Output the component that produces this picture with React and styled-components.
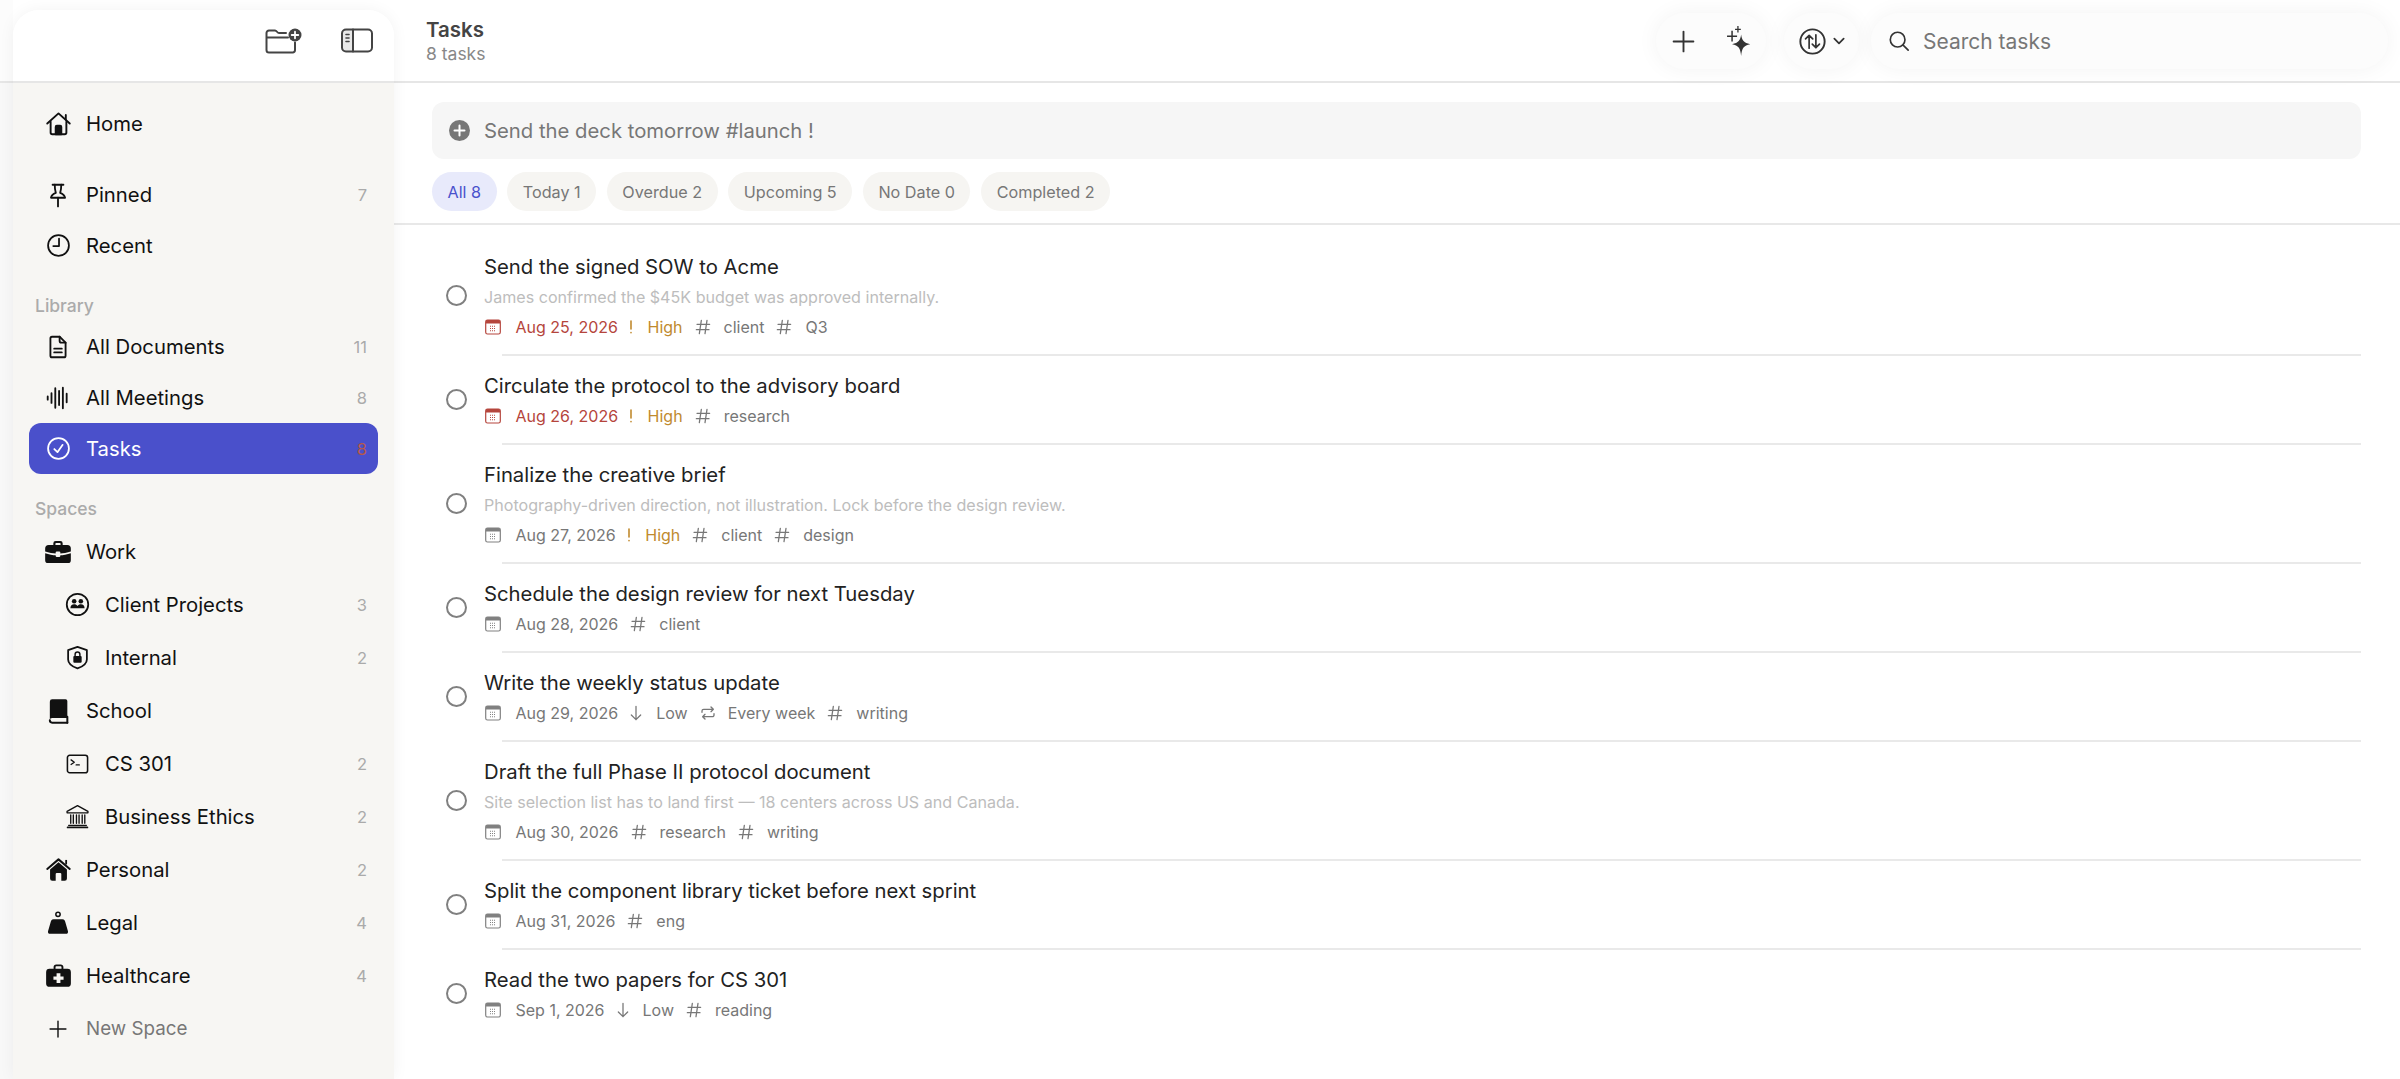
import React from "react";
import styled, { createGlobalStyle } from "styled-components";

const Global = createGlobalStyle`
  html, body { margin: 0; padding: 0; background: #fff; }
  body { font-family: Inter, "Liberation Sans", sans-serif; -webkit-font-smoothing: antialiased; }
  * { box-sizing: border-box; }
`;

/* ---------- layout ---------- */
const Shell = styled.div`
  display: flex;
  width: 2400px;
  height: 1079px;
  overflow: hidden;
  background: #fff;
`;
const Gutter = styled.div`
  width: 13px;
  flex: none;
  display: flex;
  flex-direction: column;
`;
const GutterTop = styled.div`
  height: 83px;
  flex: none;
  background: #fcfcfc;
  border-bottom: 2px solid #e6e6e6;
`;
const GutterBottom = styled.div`
  flex: 1;
  background: #f8f8f8;
`;
const Sidebar = styled.aside`
  width: 381px;
  flex: none;
  margin-top: 10px;
  display: flex;
  flex-direction: column;
  border-radius: 26px 26px 0 0;
  overflow: hidden;
  box-shadow: 0 0 16px rgba(0, 0, 0, 0.05);
  position: relative;
  z-index: 1;
`;
const SidebarTop = styled.div`
  height: 73px;
  flex: none;
  background: #fff;
  border-bottom: 2px solid #e6e6e6;
  display: flex;
  align-items: center;
  justify-content: flex-end;
  gap: 38px;
  padding: 0 21px 10px 0;
  color: #444;
`;
const SidebarBody = styled.nav`
  flex: 1;
  background: #f7f6f3;
  padding: 15px 16px 0;
`;
const Row = styled.div`
  display: flex;
  align-items: center;
  height: ${(p) => (p.$tall ? 53 : 51)}px;
  padding-left: ${(p) => (p.$nested ? 34 : 15)}px;
  padding-right: 11px;
  margin-bottom: ${(p) => p.$after || 0}px;
  border-radius: 12px;
  background: ${(p) => (p.$active ? "#4a50cb" : "transparent")};
  color: ${(p) => (p.$active ? "#fff" : p.$muted ? "#777" : "#111")};
  font-size: ${(p) => (p.$muted ? 18.8 : 20.3)}px;
`;
const RowIcon = styled.span`
  width: 28px;
  height: 28px;
  flex: none;
  margin-right: 14px;
  display: flex;
  align-items: center;
  justify-content: center;
  color: ${(p) => (p.$active ? "#fff" : "#111")};
`;
const RowLabel = styled.span`
  flex: 1;
`;
const Count = styled.span`
  font-size: 16.5px;
  color: ${(p) => (p.$alert ? "#b5584a" : "#aaa")};
`;
const GroupLabel = styled.div`
  height: ${(p) => p.$h || 50}px;
  padding: 22px 0 0 6px;
  font-size: 17.5px;
  line-height: 25px;
  font-weight: 500;
  color: #ababab;
`;

/* ---------- main ---------- */
const Main = styled.main`
  flex: 1;
  min-width: 0;
  display: flex;
  flex-direction: column;
`;
const Header = styled.header`
  height: 83px;
  flex: none;
  border-bottom: 2px solid #e6e6e6;
  display: flex;
  align-items: center;
  padding: 1px 12px 0 32px;
  background: #fff;
`;
const TitleBlock = styled.div`
  flex: 1;
  display: flex;
  flex-direction: column;
`;
const PageTitle = styled.div`
  font-size: 20.5px;
  line-height: 26px;
  font-weight: 600;
  color: #444;
`;
const PageSub = styled.div`
  font-size: 17.5px;
  line-height: 22px;
  color: #888;
`;
const Pill = styled.div`
  height: 56px;
  width: ${(p) => p.$w}px;
  flex: ${(p) => (p.$w ? "none" : 1)};
  margin-left: ${(p) => p.$ml || 0}px;
  display: flex;
  align-items: center;
  padding-left: ${(p) => p.$pl || 0}px;
  gap: ${(p) => p.$gap || 0}px;
  border-radius: 28px;
  background: #fcfcfc;
  box-shadow: 0 0 22px rgba(0, 0, 0, 0.05);
  color: #333;
`;
const Search = styled(Pill)`
  width: 517px;
  flex: none;
`;
const SearchText = styled.span`
  font-size: 21px;
  color: #777;
`;
const Body = styled.div`
  flex: 1;
  min-height: 0;
`;
const QuickAdd = styled.div`
  height: 57px;
  margin: 19px 39px 0 38px;
  padding-left: 17px;
  display: flex;
  align-items: center;
  gap: 14px;
  background: #f6f6f6;
  border-radius: 12px;
  font-size: 20.3px;
  color: #777;
`;
const Chips = styled.div`
  display: flex;
  gap: 10.7px;
  height: 66px;
  padding: 13px 0 0 38px;
  border-bottom: 2px solid #e8e8e8;
`;
const Chip = styled.div`
  height: 39px;
  padding: 0 15.5px;
  display: flex;
  align-items: center;
  border-radius: 20px;
  font-size: 16.2px;
  background: ${(p) => (p.$active ? "#e8eafb" : "#f6f5f2")};
  color: ${(p) => (p.$active ? "#4a52cc" : "#777")};
`;
const List = styled.div`
  padding-top: 11px;
`;
const Task = styled.div`
  display: flex;
  align-items: center;
  padding-left: 52px;
`;
const Circle = styled.div`
  width: 21px;
  height: 21px;
  flex: none;
  margin-right: 17px;
  border-radius: 50%;
  border: 2px solid #808080;
`;
const Content = styled.div`
  padding: 16px 0 13px;
`;
const TaskTitle = styled.div`
  font-size: 20.3px;
  line-height: 30px;
  color: #222;
`;
const Desc = styled.div`
  font-size: 16.1px;
  line-height: 30px;
  color: #bdbdbd;
`;
const Meta = styled.div`
  display: flex;
  align-items: center;
  height: 30px;
  font-size: 16px;
  color: #777;
`;
const MetaIcon = styled.span`
  width: 16px;
  height: 16px;
  flex: none;
  display: flex;
  align-items: center;
  justify-content: center;
  margin: 0 ${(p) => p.$gap ?? 13}px 0 ${(p) => p.$before ?? 9}px;
  color: ${(p) => p.$c || "#777"};
`;
const MetaText = styled.span`
  color: ${(p) => p.$c || "#777"};
`;
const Separator = styled.div`
  height: 2px;
  margin: -1px 39px -1px 108px;
  background: #e9e9e9;
`;

/* ---------- icons ---------- */
const Svg = ({ s = 24, w, h, children, ...rest }) => (
  <svg width={w || s} height={h || s} viewBox="0 0 24 24" fill="none" stroke="currentColor" strokeWidth="1.7" strokeLinecap="round" strokeLinejoin="round" {...rest}>
    {children}
  </svg>
);
const HomeIcon = () => (
  <Svg s={27}>
    <path d="M2 12 12 3l10 9" />
    <path d="M18.500 4.500v4" />
    <path d="M5 10.500V20a1.500 1.500 0 0 0 1.500 1.500h11A1.500 1.500 0 0 0 19 20v-9.500" />
    <path d="M9.500 21.500V15a1 1 0 0 1 1-1h3a1 1 0 0 1 1 1v6.500z" fill="currentColor" />
  </Svg>
);
const PinIcon = () => (
  <Svg s={26}>
    <path d="M7 2.500h10" />
    <path d="M9 2.500c0 4 .3 5.500 1 7.500-2 .7-4 2-4.500 4.500h13c-.5-2.500-2.500-3.800-4.500-4.500.7-2 1-3.500 1-7.500" />
    <path d="M12 14.500v8" />
  </Svg>
);
const ClockIcon = () => (
  <Svg s={25}>
    <circle cx="12" cy="12" r="10" />
    <path d="M12.500 5.500V12.500H7" />
  </Svg>
);
const DocIcon = () => (
  <Svg s={26}>
    <path d="M6.500 2.500h7l5.500 5.500v12a1.500 1.500 0 0 1-1.500 1.500h-11A1.500 1.500 0 0 1 5 20V4a1.500 1.500 0 0 1 1.500-1.500z" />
    <path d="M13.500 2.500v4a1.500 1.500 0 0 0 1.500 1.500h4" />
    <path d="M8.500 13.500h7M8.500 17h7" />
  </Svg>
);
const WaveIcon = () => (
  <Svg s={26}>
    <path d="M2.500 10.500v3M6 7.500v9M9.500 3v18M13 5.500v13M16.500 2.500v19M20 8v8" />
  </Svg>
);
const CheckIcon = () => (
  <Svg s={25}>
    <circle cx="12" cy="12" r="10" />
    <path d="m8 12.500 3 3 5-7" />
  </Svg>
);
const BriefcaseIcon = () => (
  <Svg s={28} stroke="none">
    <path fill="currentColor" d="M8 6V4.500A2 2 0 0 1 10 2.500h4a2 2 0 0 1 2 2V6h-1.800V4.700a.4.4 0 0 0-.4-.4h-3.600a.4.4 0 0 0-.4.4V6z" />
    <path fill="currentColor" d="M4 6h16a3 3 0 0 1 3 3v2.500c-3 1-7 1.700-9 1.700v-.7a1 1 0 0 0-1-1h-2a1 1 0 0 0-1 1v.7c-2 0-6-.7-9-1.700V9a3 3 0 0 1 3-3z" />
    <path fill="currentColor" d="M1 13c3 1 7 1.800 9 1.800v.5a1 1 0 0 0 1 1h2a1 1 0 0 0 1-1v-.5c2 0 6-.8 9-1.800v6a2.500 2.500 0 0 1-2.500 2.500h-17A2.500 2.500 0 0 1 1 19z" />
  </Svg>
);
const PeopleIcon = () => (
  <Svg s={25}>
    <circle cx="12" cy="12" r="10.300" />
    <circle cx="8.800" cy="8.800" r="2.200" fill="currentColor" stroke="none" />
    <circle cx="15.200" cy="8.800" r="2.200" fill="currentColor" stroke="none" />
    <path d="M5.200 15.500c0-2.400 1.400-3.700 3.500-3.700 1.500 0 2.500.6 3.300 1.700.8-1.100 1.800-1.700 3.300-1.700 2.100 0 3.500 1.300 3.500 3.700z" fill="currentColor" stroke="none" />
  </Svg>
);
const ShieldIcon = () => (
  <Svg s={25}>
    <path d="M12 1.800 21 5v9c0 4-4 6.800-9 8.500C7 20.800 3 18 3 14V5z" />
    <rect x="8" y="10.500" width="8" height="6.500" rx="1" fill="currentColor" stroke="none" />
    <path d="M9.700 10.500V9a2.300 2.300 0 0 1 4.600 0v1.500" strokeWidth="1.400" />
  </Svg>
);
const BookIcon = () => (
  <Svg s={28} stroke="none">
    <path fill="currentColor" d="M7 2h11.500A1.500 1.500 0 0 1 20 3.500V18H7A2 2 0 0 0 5 20V4a2 2 0 0 1 2-2z" />
    <path d="M5 20a2 2 0 0 0 2 2h13" stroke="currentColor" strokeWidth="1.700" fill="none" />
    <path d="M20 17v5" stroke="currentColor" strokeWidth="1.700" />
  </Svg>
);
const TerminalIcon = () => (
  <Svg w={25} h={22}>
    <rect x="1" y="2.500" width="22" height="19" rx="2.500" />
    <path d="m5 7.500 3.500 2.500-3.500 2.500M10.500 13h3.500" strokeWidth="1.400" />
  </Svg>
);
const BankIcon = () => (
  <Svg s={25} strokeWidth="1.300">
    <path d="M12 1.500 2 7v1.500h20V7z" />
    <path d="M2.500 22.500h19" strokeWidth="1.700" />
    <path d="M3.500 20.500h17" />
    <path d="M5.500 10.500v8M8 10.500v8M11 10.500v8M13.500 10.500v8M16.500 10.500v8M19 10.500v8" />
  </Svg>
);
const HouseFillIcon = () => (
  <Svg s={27} stroke="none">
    <path d="M2 11.500 12 3l10 8.500" stroke="currentColor" strokeWidth="1.800" />
    <path d="M18 3.500h1.600v4H18z" fill="currentColor" />
    <path fill="currentColor" fillRule="evenodd" d="M12 5.500 19.500 12v8a2 2 0 0 1-2 2h-11a2 2 0 0 1-2-2v-8zM9.500 22h5v-6a1 1 0 0 0-1-1h-3a1 1 0 0 0-1 1z" />
  </Svg>
);
const WeightIcon = () => (
  <Svg s={26} stroke="none">
    <circle cx="12" cy="4" r="2" stroke="currentColor" strokeWidth="1.400" fill="none" />
    <path fill="currentColor" d="M8 8.500h8c2 0 2.500 1.500 3 3.500l2.200 7.500c.3 1.300-.4 2.500-2 2.500H4.800c-1.600 0-2.300-1.200-2-2.500L5 12c.5-2 1-3.500 3-3.500z" />
  </Svg>
);
const MedIcon = () => (
  <Svg s={27} stroke="none">
    <path fill="none" stroke="currentColor" strokeWidth="1.700" d="M8.500 6V4.500a1.500 1.500 0 0 1 1.500-1.500h4a1.500 1.500 0 0 1 1.500 1.500V6" />
    <path fill="currentColor" fillRule="evenodd" d="M4 6h16a3 3 0 0 1 3 3v10a3 3 0 0 1-3 3H4a3 3 0 0 1-3-3V9a3 3 0 0 1 3-3zm6.300 4v2.800H7.500v3h2.800v2.800h3.400v-2.800h2.800v-3h-2.800V10z" />
  </Svg>
);
const PlusIcon = ({ s = 24, sw = 1.7 }) => (
  <Svg s={s} strokeWidth={sw}>
    <path d="M12 2.500v19M2.500 12h19" />
  </Svg>
);
const FolderPlus = () => (
  <svg width="38" height="26" viewBox="0 0 38 26" fill="none" stroke="currentColor" strokeWidth="2" strokeLinecap="round" strokeLinejoin="round">
    <path d="M30 14.500V22a2.500 2.500 0 0 1-2 2.500H4a2.500 2.500 0 0 1-2.500-2.500V5A2.500 2.500 0 0 1 4 2.500h6c2 0 2 2.500 4 2.500h7" />
    <path d="M2 9.500h21" />
    <circle cx="30" cy="7" r="6.500" fill="currentColor" stroke="none" />
    <path d="M30 3.700v6.600M26.700 7h6.600" stroke="#fff" strokeWidth="1.800" />
  </svg>
);
const PanelIcon = () => (
  <svg width="32" height="25" viewBox="0 0 32 25" fill="none" stroke="currentColor" strokeWidth="2" strokeLinecap="round">
    <rect x="1" y="1.500" width="30" height="22" rx="4" />
    <path d="M12 1.500v22" />
    <path d="M5 6.500h3M5 10h3M5 13.500h3" strokeWidth="1.600" />
    <path d="M2 5a3 3 0 0 1 3-3h7v21H5a3 3 0 0 1-3-3z" fill="currentColor" fillOpacity=".12" stroke="none" />
  </svg>
);
const SparkleIcon = () => (
  <svg width="28" height="32" viewBox="0 0 26 30" fill="currentColor">
    <path d="M15 9c.7 5.500 2.500 7.800 8.500 9-6 1.200-7.800 3.500-8.500 11-.7-7.500-2.500-9.800-8.500-11 6-1.200 7.800-3.500 8.500-9z" />
    <path d="M6.500 5.500v10M1.800 10.500h9.400" stroke="currentColor" strokeWidth="1.400" fill="none" />
    <path d="M12 1v6M9.300 4h5.400" stroke="currentColor" strokeWidth="1.200" fill="none" />
  </svg>
);
const SortIcon = () => (
  <Svg s={27}>
    <circle cx="12" cy="12" r="10.800" />
    <path d="M9 18V6.500M5.800 9.700 9 6.500l3.200 3.200M15 6v11.500M11.800 14.300l3.200 3.200 3.200-3.200" strokeWidth="1.500" />
  </Svg>
);
const ChevronIcon = () => (
  <Svg s={14} strokeWidth="3">
    <path d="m4 8 8 8 8-8" />
  </Svg>
);
const SearchIcon = () => (
  <Svg s={22} strokeWidth="1.800">
    <circle cx="10.500" cy="10.500" r="8" />
    <path d="m16.500 16.500 5.500 5.500" />
  </Svg>
);
const AddDot = () => (
  <svg width="21" height="21" viewBox="0 0 21 21">
    <circle cx="10.500" cy="10.500" r="10.500" fill="#777" />
    <path d="M10.500 5.500v10M5.500 10.500h10" stroke="#fff" strokeWidth="2" strokeLinecap="round" />
  </svg>
);
const CalendarIcon = () => (
  <svg width="16" height="16" viewBox="0 0 16 16" fill="none" stroke="currentColor">
    <rect x=".7" y="1" width="14.600" height="14" rx="1.800" strokeWidth="1.200" />
    <path d="M1 2.500a1.500 1.500 0 0 1 1.500-1.500h11A1.500 1.500 0 0 1 15 2.500V4.500H1z" fill="currentColor" stroke="none" />
    <path d="M5 7.200h6M5 9.500h6M5 11.800h6" strokeWidth="1.100" strokeDasharray="1 1" />
  </svg>
);
const HashIcon = () => (
  <Svg s={16}>
    <path d="M9.500 2 6.500 22M18 2l-3 20M3 8h19M2 16h19" strokeWidth="1.900" />
  </Svg>
);
const BangIcon = () => (
  <svg width="4" height="16" viewBox="0 0 4 16" fill="none" stroke="currentColor" strokeWidth="1.600" strokeLinecap="round">
    <path d="M2 2v8" />
    <path d="M2 13.500v.2" />
  </svg>
);
const ArrowDown = () => (
  <Svg s={16} strokeWidth="1.900">
    <path d="M12 2v20M5 15l7 7 7-7" />
  </Svg>
);
const RepeatIcon = () => (
  <Svg s={18} strokeWidth="2">
    <path d="M3 11V9a2.500 2.500 0 0 1 2.500-2.500H20M16.500 3 20 6.500 16.500 10" />
    <path d="M21 13v2a2.500 2.500 0 0 1-2.500 2.500H4M7.500 21 4 17.500 7.500 14" />
  </Svg>
);

/* ---------- data ---------- */
const RED = "#b5453c";
const ORANGE = "#c08a2e";
const tasks = [
  { title: "Send the signed SOW to Acme", desc: "James confirmed the $45K budget was approved internally.", date: "Aug 25, 2026", overdue: true, high: true, tags: ["client", "Q3"] },
  { title: "Circulate the protocol to the advisory board", date: "Aug 26, 2026", overdue: true, high: true, tags: ["research"] },
  { title: "Finalize the creative brief", desc: "Photography-driven direction, not illustration. Lock before the design review.", date: "Aug 27, 2026", high: true, tags: ["client", "design"] },
  { title: "Schedule the design review for next Tuesday", date: "Aug 28, 2026", tags: ["client"] },
  { title: "Write the weekly status update", date: "Aug 29, 2026", low: true, repeat: "Every week", tags: ["writing"] },
  { title: "Draft the full Phase II protocol document", desc: "Site selection list has to land first — 18 centers across US and Canada.", date: "Aug 30, 2026", tags: ["research", "writing"] },
  { title: "Split the component library ticket before next sprint", date: "Aug 31, 2026", tags: ["eng"] },
  { title: "Read the two papers for CS 301", date: "Sep 1, 2026", low: true, tags: ["reading"] },
];
const chips = ["All 8", "Today 1", "Overdue 2", "Upcoming 5", "No Date 0", "Completed 2"];

const NavRow = ({ icon, label, count, ...p }) => (
  <Row {...p}>
    <RowIcon $active={p.$active}>{icon}</RowIcon>
    <RowLabel>{label}</RowLabel>
    {count != null && <Count $alert={p.$active}>{count}</Count>}
  </Row>
);

const TaskMeta = ({ t }) => (
  <Meta>
    <MetaIcon $before={1} $gap={14.5} $c={t.overdue ? RED : "#808080"}><CalendarIcon /></MetaIcon>
    <MetaText $c={t.overdue ? RED : undefined}>{t.date}</MetaText>
    {t.high && (
      <>
        <MetaIcon $before={5} $gap={8.5} $c={ORANGE}><BangIcon /></MetaIcon>
        <MetaText $c={ORANGE}>High</MetaText>
      </>
    )}
    {t.low && (
      <>
        <MetaIcon $before={10} $gap={12}><ArrowDown /></MetaIcon>
        <MetaText>Low</MetaText>
      </>
    )}
    {t.repeat && (
      <>
        <MetaIcon $before={12} $gap={12}><RepeatIcon /></MetaIcon>
        <MetaText>{t.repeat}</MetaText>
      </>
    )}
    {t.tags.map((tag) => (
      <React.Fragment key={tag}>
        <MetaIcon $before={12} $gap={13}><HashIcon /></MetaIcon>
        <MetaText>{tag}</MetaText>
      </React.Fragment>
    ))}
  </Meta>
);

export default function App() {
  return (
    <Shell>
      <Global />
      <Gutter>
        <GutterTop />
        <GutterBottom />
      </Gutter>
      <Sidebar>
        <SidebarTop>
          <FolderPlus />
          <PanelIcon />
        </SidebarTop>
        <SidebarBody>
          <NavRow icon={<HomeIcon />} label="Home" $after={20} />
          <NavRow icon={<PinIcon />} label="Pinned" count={7} />
          <NavRow icon={<ClockIcon />} label="Recent" />
          <GroupLabel>Library</GroupLabel>
          <NavRow icon={<DocIcon />} label="All Documents" count={11} />
          <NavRow icon={<WaveIcon />} label="All Meetings" count={8} />
          <NavRow icon={<CheckIcon />} label="Tasks" count={8} $active />
          <GroupLabel $h={51}>Spaces</GroupLabel>
          <NavRow icon={<BriefcaseIcon />} label="Work" $tall />
          <NavRow icon={<PeopleIcon />} label="Client Projects" count={3} $tall $nested />
          <NavRow icon={<ShieldIcon />} label="Internal" count={2} $tall $nested />
          <NavRow icon={<BookIcon />} label="School" $tall />
          <NavRow icon={<TerminalIcon />} label="CS 301" count={2} $tall $nested />
          <NavRow icon={<BankIcon />} label="Business Ethics" count={2} $tall $nested />
          <NavRow icon={<HouseFillIcon />} label="Personal" count={2} $tall />
          <NavRow icon={<WeightIcon />} label="Legal" count={4} $tall />
          <NavRow icon={<MedIcon />} label="Healthcare" count={4} $tall />
          <NavRow icon={<PlusIcon s={20} />} label="New Space" $tall $muted />
        </SidebarBody>
      </Sidebar>
      <Main>
        <Header>
          <TitleBlock>
            <PageTitle>Tasks</PageTitle>
            <PageSub>8 tasks</PageSub>
          </TitleBlock>
          <Pill $w={110} $pl={15} $gap={29}>
            <PlusIcon s={25} sw={1.8} />
            <SparkleIcon />
          </Pill>
          <Pill $w={75} $ml={18} $pl={15} $gap={6}>
            <SortIcon />
            <ChevronIcon />
          </Pill>
          <Search $ml={12} $pl={17} $gap={13}>
            <SearchIcon />
            <SearchText>Search tasks</SearchText>
          </Search>
        </Header>
        <Body>
          <QuickAdd>
            <AddDot />
            <span>Send the deck tomorrow #launch !</span>
          </QuickAdd>
          <Chips>
            {chips.map((c, i) => (
              <Chip key={c} $active={i === 0}>{c}</Chip>
            ))}
          </Chips>
          <List>
            {tasks.map((t, i) => (
              <React.Fragment key={t.title}>
                {i > 0 && <Separator />}
                <Task>
                  <Circle />
                  <Content>
                    <TaskTitle>{t.title}</TaskTitle>
                    {t.desc && <Desc>{t.desc}</Desc>}
                    <TaskMeta t={t} />
                  </Content>
                </Task>
              </React.Fragment>
            ))}
          </List>
        </Body>
      </Main>
    </Shell>
  );
}
